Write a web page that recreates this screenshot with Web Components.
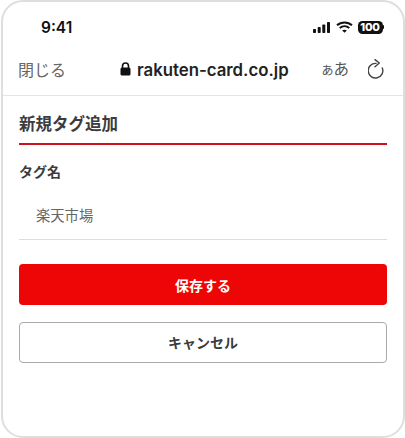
<!doctype html>
<html lang="ja">
<head>
<meta charset="utf-8">
<style>
  html, body { margin: 0; background: #fff; }
  body { font-family: "Inter", "Noto Sans CJK JP", sans-serif; }
</style>
</head>
<body>
<phone-frame>
  <status-bar slot="top"></status-bar>
  <browser-bar slot="top" domain="rakuten-card.co.jp"></browser-bar>
  <tag-form></tag-form>
</phone-frame>
<script>
const CJK = `"Noto Sans CJK JP", sans-serif`;

class PhoneFrame extends HTMLElement {
  connectedCallback() {
    if (this.shadowRoot) return;
    this.attachShadow({ mode: "open" }).innerHTML = `
      <style>
        :host { display: block; width: 405px; height: 438px; padding-left: 1px; box-sizing: border-box; }
        .frame {
          width: 404px; height: 438px; box-sizing: border-box;
          border: 2px solid #dedede; border-radius: 22px;
          background: #fff; overflow: hidden;
          display: flex; flex-direction: column;
        }
      </style>
      <div class="frame"><slot name="top"></slot><slot></slot></div>`;
  }
}

class StatusBar extends HTMLElement {
  connectedCallback() {
    if (this.shadowRoot) return;
    this.attachShadow({ mode: "open" }).innerHTML = `
      <style>
        :host {
          display: flex; align-items: center; height: 40px; box-sizing: border-box;
          padding: 10px 19px 0 38px; justify-content: space-between; color: #111;
        }
        .time { font: 600 15.500px/20px Inter, sans-serif; margin-top: 1px; }
        .icons { display: flex; align-items: center; }
        svg { display: block; }
        .wifi { margin: 0 5px 0 6px; }
        .battery {
          width: 25px; height: 13px; border-radius: 4.500px; background: #111; color: #fff;
          font: 800 11px/13px Inter, sans-serif; text-align: center; letter-spacing: -0.2px;
        }
        .cap { width: 1.500px; height: 4px; background: #111; border-radius: 0 1px 1px 0; }
      </style>
      <span class="time">9:41</span>
      <span class="icons">
        <svg width="17" height="11" viewBox="0 0 17 11" fill="#111">
          <rect x="0" y="7" width="3" height="4" rx=".8"/><rect x="4.700" y="5" width="3" height="6" rx=".8"/>
          <rect x="9.300" y="2.500" width="3" height="8.500" rx=".8"/><rect x="14" y="0" width="3" height="11" rx=".8"/>
        </svg>
        <svg class="wifi" width="17" height="12" viewBox="0 0 17 12" fill="none" stroke="#111" stroke-width="2">
          <path d="M1 4.300C5.200.4 11.800.4 16 4.300"/><path d="M3.700 7.100c2.800-2.400 6.800-2.400 9.600 0"/>
          <path d="M8.500 11.800 6.200 9.500c1.400-1 3.200-1 4.600 0z" fill="#111" stroke="none"/>
        </svg>
        <span class="battery">100</span><span class="cap"></span>
      </span>`;
  }
}

class BrowserBar extends HTMLElement {
  connectedCallback() {
    if (this.shadowRoot) return;
    const domain = this.getAttribute("domain");
    this.attachShadow({ mode: "open" }).innerHTML = `
      <style>
        :host {
          display: flex; align-items: center; height: 54px; box-sizing: border-box;
          border-bottom: 1px solid #e4e4e4; padding: 4px 19px 3px 15px; color: #666;
        }
        .close { font: 400 16px/22px ${CJK}; width: 100px; }
        .url { display: flex; align-items: center; gap: 6px; color: #222; font: 600 16.800px/22px Inter, sans-serif; margin: 2px 0 0 2px; }
        .url svg { margin-top: -2px; }
        .aa { font: 400 15.500px/20px ${CJK}; color: #555; margin-left: auto; display: flex; align-items: baseline; }
        .aa small { font-size: 12px; }
        .reload { margin-left: 19px; display: block; }
      </style>
      <span class="close">閉じる</span>
      <span class="url">
        <svg width="11" height="14" viewBox="0 0 11 14"><path d="M2.500 6V4a3 3 0 0 1 6 0v2" fill="none" stroke="#111" stroke-width="1.600"/><rect x=".5" y="5.500" width="10" height="8" rx="1.500" fill="#111"/></svg>
        ${domain}
      </span>
      <span class="aa"><small>あ</small>あ</span>
      <svg class="reload" width="16" height="20" viewBox="0 0 16 20" fill="none" stroke="#444" stroke-width="1.400" stroke-linecap="round" stroke-linejoin="round">
        <path d="M8 4.400A7.300 7.300 0 1 0 14.300 9"/><path d="M7 .6 11.300 4 7 7.700"/>
      </svg>`;
  }
}

class FormButton extends HTMLElement {
  connectedCallback() {
    if (this.shadowRoot) return;
    this.attachShadow({ mode: "open" }).innerHTML = `
      <style>
        :host {
          display: flex; align-items: center; justify-content: center;
          height: 41px; box-sizing: border-box; border-radius: 4px;
          font: 700 14px/20px ${CJK}; padding-bottom: 2px;
          background: #fff; color: #3c3c3c; border: 1px solid #aaa;
        }
        :host([primary]) { background: #ee0606; color: #fff; border: 0; padding-bottom: 0; }
      </style>
      <slot></slot>`;
  }
}

class TagForm extends HTMLElement {
  connectedCallback() {
    if (this.shadowRoot) return;
    this.attachShadow({ mode: "open" }).innerHTML = `
      <style>
        :host { display: block; padding: 0 16px; color: #3c3c3c; font-family: ${CJK}; }
        h1 {
          margin: 0; height: 49px; box-sizing: border-box; padding-top: 15px;
          font: 700 16.500px/24px ${CJK}; border-bottom: 2px solid #c8141e;
        }
        label { display: block; margin-top: 16px; font: 700 14px/20px ${CJK}; }
        .input {
          margin-top: 12px; height: 47px; box-sizing: border-box; padding: 10px 17px 0;
          font: 400 14.300px/24px ${CJK}; color: #666; border-bottom: 1px solid #ddd;
        }
        form-button { margin-top: 24px; }
        form-button + form-button { margin-top: 17px; }
      </style>
      <h1>新規タグ追加</h1>
      <label>タグ名</label>
      <div class="input">楽天市場</div>
      <form-button primary>保存する</form-button>
      <form-button>キャンセル</form-button>`;
  }
}

customElements.define("phone-frame", PhoneFrame);
customElements.define("status-bar", StatusBar);
customElements.define("browser-bar", BrowserBar);
customElements.define("form-button", FormButton);
customElements.define("tag-form", TagForm);
</script>
</body>
</html>
